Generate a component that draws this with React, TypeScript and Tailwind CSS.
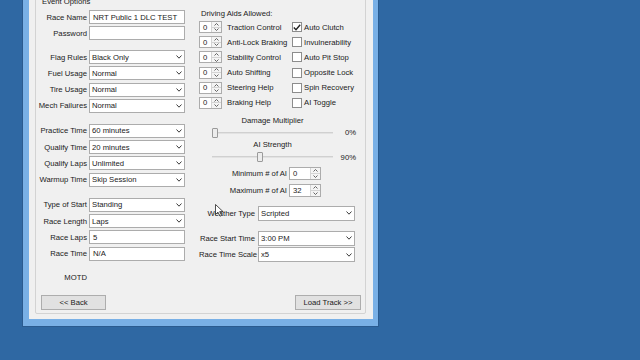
import React from 'react';

const Chevron = () => (
  <svg width="6" height="4" viewBox="0 0 6 4" className="shrink-0">
    <polyline points="0.5,0.5 3,3.2 5.5,0.5" fill="none" stroke="#3a3a3a" strokeWidth="1" />
  </svg>
);

const Arrow = ({ up }: { up?: boolean }) => (
  <svg width="5" height="3" viewBox="0 0 5 3">
    <polyline
      points={up ? '0.5,2.5 2.5,0.5 4.5,2.5' : '0.5,0.5 2.5,2.5 4.5,0.5'}
      fill="none"
      stroke="#555"
      strokeWidth="0.9"
    />
  </svg>
);

const Select = ({ value, size }: { value: string; size: string }) => (
  <div className={`${size} bg-white border border-[#acacac] flex items-center justify-between pl-[2px] pr-[2px]`}>
    <span className="whitespace-nowrap">{value}</span>
    <Chevron />
  </div>
);

const TextBox = ({ value }: { value: string }) => (
  <div className="w-[96px] h-[14px] bg-white border border-[#acacac] flex items-center pl-[3px]">
    <span className="whitespace-nowrap">{value}</span>
  </div>
);

const Spin = ({ value, field, height }: { value: string; field: string; height: string }) => (
  <div className={`flex ${height} bg-white border border-[#acacac]`}>
    <div className={`${field} pl-[3px] flex items-center`}>{value}</div>
    <div className="w-[10px] flex flex-col border-l border-[#d4d4d4] bg-[#f4f4f4]">
      <div className="flex-1 flex items-center justify-center border-b border-[#d4d4d4]">
        <Arrow up />
      </div>
      <div className="flex-1 flex items-center justify-center">
        <Arrow />
      </div>
    </div>
  </div>
);

const CheckBox = ({ checked, label }: { checked?: boolean; label: string }) => (
  <div className="flex items-center h-[12px]">
    <div className="w-[10px] h-[10px] bg-white border border-[#8c8c8c] flex items-center justify-center">
      {checked && (
        <svg width="8" height="7" viewBox="0 0 8 7">
          <polyline points="0.8,3.6 3,5.8 7.2,0.8" fill="none" stroke="#222" strokeWidth="1.4" />
        </svg>
      )}
    </div>
    <span className="ml-[2px] whitespace-nowrap">{label}</span>
  </div>
);

const Row = ({ label, children }: { label: string; children: React.ReactNode }) => (
  <div className="flex items-center h-[14px]">
    <div className="w-[51px] text-right whitespace-nowrap">{label}</div>
    <div className="ml-[2px]">{children}</div>
  </div>
);

const Slider = ({ thumb, pct }: { thumb: string; pct: string }) => (
  <div className="flex items-center h-[10px]">
    <div className="relative w-[121px] h-[10px] ml-[13px]">
      <div className="absolute left-0 right-0 top-[4px] h-[2px] bg-[#e2e2e2] border-t border-[#d0d0d0]" />
      <div className={`absolute top-0 ${thumb} w-[6px] h-[10px] bg-[#ececec] border border-[#9a9a9a] rounded-[1px]`} />
    </div>
    <div className="w-[23px] text-right">{pct}</div>
  </div>
);

const Button = ({ label, size }: { label: string; size: string }) => (
  <div className={`${size} h-[15px] bg-[#e1e1e1] border border-[#adadad] flex items-center justify-center`}>
    {label}
  </div>
);

const aids = [
  { label: 'Traction Control', check: 'Auto Clutch', checked: true },
  { label: 'Anti-Lock Braking', check: 'Invulnerability' },
  { label: 'Stability Control', check: 'Auto Pit Stop' },
  { label: 'Auto Shifting', check: 'Opposite Lock' },
  { label: 'Steering Help', check: 'Spin Recovery' },
  { label: 'Braking Help', check: 'AI Toggle' },
];

export default function App() {
  return (
    <div className="relative w-[640px] h-[360px] overflow-hidden bg-[#2f68a3] flex items-start font-['Liberation_Sans',Arial,sans-serif] text-[7.7px] leading-[9px] text-[#1a1a1a]">
      {/* window frame */}
      <div className="ml-[22px] w-[357px] h-[327px] flex flex-col border-l border-r border-b border-[#2a5b90] bg-[#79b0e6] pl-[6px] pr-[5px] pb-[7px]">
        <div className="flex-1 bg-[#f0f0f0] pl-[6px] pr-[7px] pb-[5px]">
          {/* Event Options group */}
          <div className="relative -mt-[3px] h-[317px] border border-[#d3d3d3] rounded-[2px] flex flex-col">
            <div className="absolute left-[5px] top-[-1px] px-[1px] bg-[#f0f0f0]">Event Options</div>

            <div className="flex">
              {/* left column */}
              <div className="w-[150px] pt-[12px] flex flex-col">
                <div className="flex flex-col gap-[2px]">
                  <Row label="Race Name">
                    <TextBox value="NRT Public 1 DLC TEST" />
                  </Row>
                  <Row label="Password">
                    <TextBox value="" />
                  </Row>
                </div>
                <div className="mt-[10px] flex flex-col gap-[2.3px]">
                  <Row label="Flag Rules">
                    <Select value="Black Only" size="w-[96px] h-[14px]" />
                  </Row>
                  <Row label="Fuel Usage">
                    <Select value="Normal" size="w-[96px] h-[14px]" />
                  </Row>
                  <Row label="Tire Usage">
                    <Select value="Normal" size="w-[96px] h-[14px]" />
                  </Row>
                  <Row label="Mech Failures">
                    <Select value="Normal" size="w-[96px] h-[14px]" />
                  </Row>
                </div>
                <div className="mt-[11px] flex flex-col gap-[2.3px]">
                  <Row label="Practice Time">
                    <Select value="60 minutes" size="w-[96px] h-[14px]" />
                  </Row>
                  <Row label="Qualify Time">
                    <Select value="20 minutes" size="w-[96px] h-[14px]" />
                  </Row>
                  <Row label="Qualify Laps">
                    <Select value="Unlimited" size="w-[96px] h-[14px]" />
                  </Row>
                  <Row label="Warmup Time">
                    <Select value="Skip Session" size="w-[96px] h-[14px]" />
                  </Row>
                </div>
                <div className="mt-[11px] flex flex-col gap-[2.3px]">
                  <Row label="Type of Start">
                    <Select value="Standing" size="w-[96px] h-[14px]" />
                  </Row>
                  <Row label="Race Length">
                    <Select value="Laps" size="w-[96px] h-[14px]" />
                  </Row>
                  <Row label="Race Laps">
                    <TextBox value="5" />
                  </Row>
                  <Row label="Race Time">
                    <TextBox value="N/A" />
                  </Row>
                </div>
                <div className="mt-[12px] w-[51px] text-right">MOTD</div>
              </div>

              {/* right column */}
              <div className="ml-[13px] w-[165px] pt-[10.5px] flex flex-col">
                <div className="ml-[2px]">Driving Aids Allowed:</div>
                <div className="mt-[3.5px] flex flex-col gap-[3.2px]">
                  {aids.map((a) => (
                    <div key={a.label} className="flex items-center h-[12px]">
                      <div className="w-[93px] flex items-center">
                        <Spin value="0" field="w-[11px]" height="h-[12px]" />
                        <span className="ml-[5px] whitespace-nowrap">{a.label}</span>
                      </div>
                      <CheckBox label={a.check} checked={a.checked} />
                    </div>
                  ))}
                </div>

                <div className="mt-[7.5px] w-[121px] ml-[13px] text-center">Damage Multiplier</div>
                <div className="mt-[2.5px]">
                  <Slider thumb="left-0" pct="0%" />
                </div>
                <div className="mt-[2.5px] w-[121px] ml-[13px] text-center">AI Strength</div>
                <div className="mt-[3px]">
                  <Slider thumb="left-[45px]" pct="90%" />
                </div>

                <div className="mt-[5px] flex flex-col gap-[3.5px]">
                  <div className="flex items-center h-[13px]">
                    <div className="w-[88px] text-right whitespace-nowrap">Minimum # of AI</div>
                    <div className="ml-[2px]">
                      <Spin value="0" field="w-[20px]" height="h-[13px]" />
                    </div>
                  </div>
                  <div className="flex items-center h-[13px]">
                    <div className="w-[88px] text-right whitespace-nowrap">Maximum # of AI</div>
                    <div className="ml-[2px]">
                      <Spin value="32" field="w-[20px]" height="h-[13px]" />
                    </div>
                  </div>
                </div>

                <div className="mt-[9px] flex items-center h-[15px]">
                  <div className="w-[56px] text-right whitespace-nowrap">Weather Type</div>
                  <div className="ml-[3px]">
                    <Select value="Scripted" size="w-[97px] h-[15px]" />
                  </div>
                </div>
                <div className="mt-[10px] flex flex-col gap-[1.5px]">
                  <div className="flex items-center h-[15px]">
                    <div className="w-[56px] text-right whitespace-nowrap">Race Start Time</div>
                    <div className="ml-[3px]">
                      <Select value="3:00 PM" size="w-[97px] h-[15px]" />
                    </div>
                  </div>
                  <div className="flex items-center h-[15px]">
                    <div className="w-[56px] text-right whitespace-nowrap">Race Time Scale</div>
                    <div className="ml-[3px]">
                      <Select value="x5" size="w-[97px] h-[15px]" />
                    </div>
                  </div>
                </div>
              </div>
            </div>

            {/* bottom buttons */}
            <div className="mt-auto flex justify-between pl-[5px] pr-[4px] pb-[3px]">
              <Button label="<< Back" size="w-[65px]" />
              <Button label="Load Track >>" size="w-[66px]" />
            </div>
          </div>
        </div>
      </div>

      {/* mouse pointer */}
      <svg className="absolute left-[215px] top-[204px]" width="9" height="13" viewBox="0 0 9 13">
        <path d="M0.5,0.5 L0.5,10.5 L3,8.2 L5,12.2 L6.6,11.4 L4.7,7.6 L8,7.6 Z" fill="#fff" stroke="#222" strokeWidth="0.8" />
      </svg>
    </div>
  );
}
